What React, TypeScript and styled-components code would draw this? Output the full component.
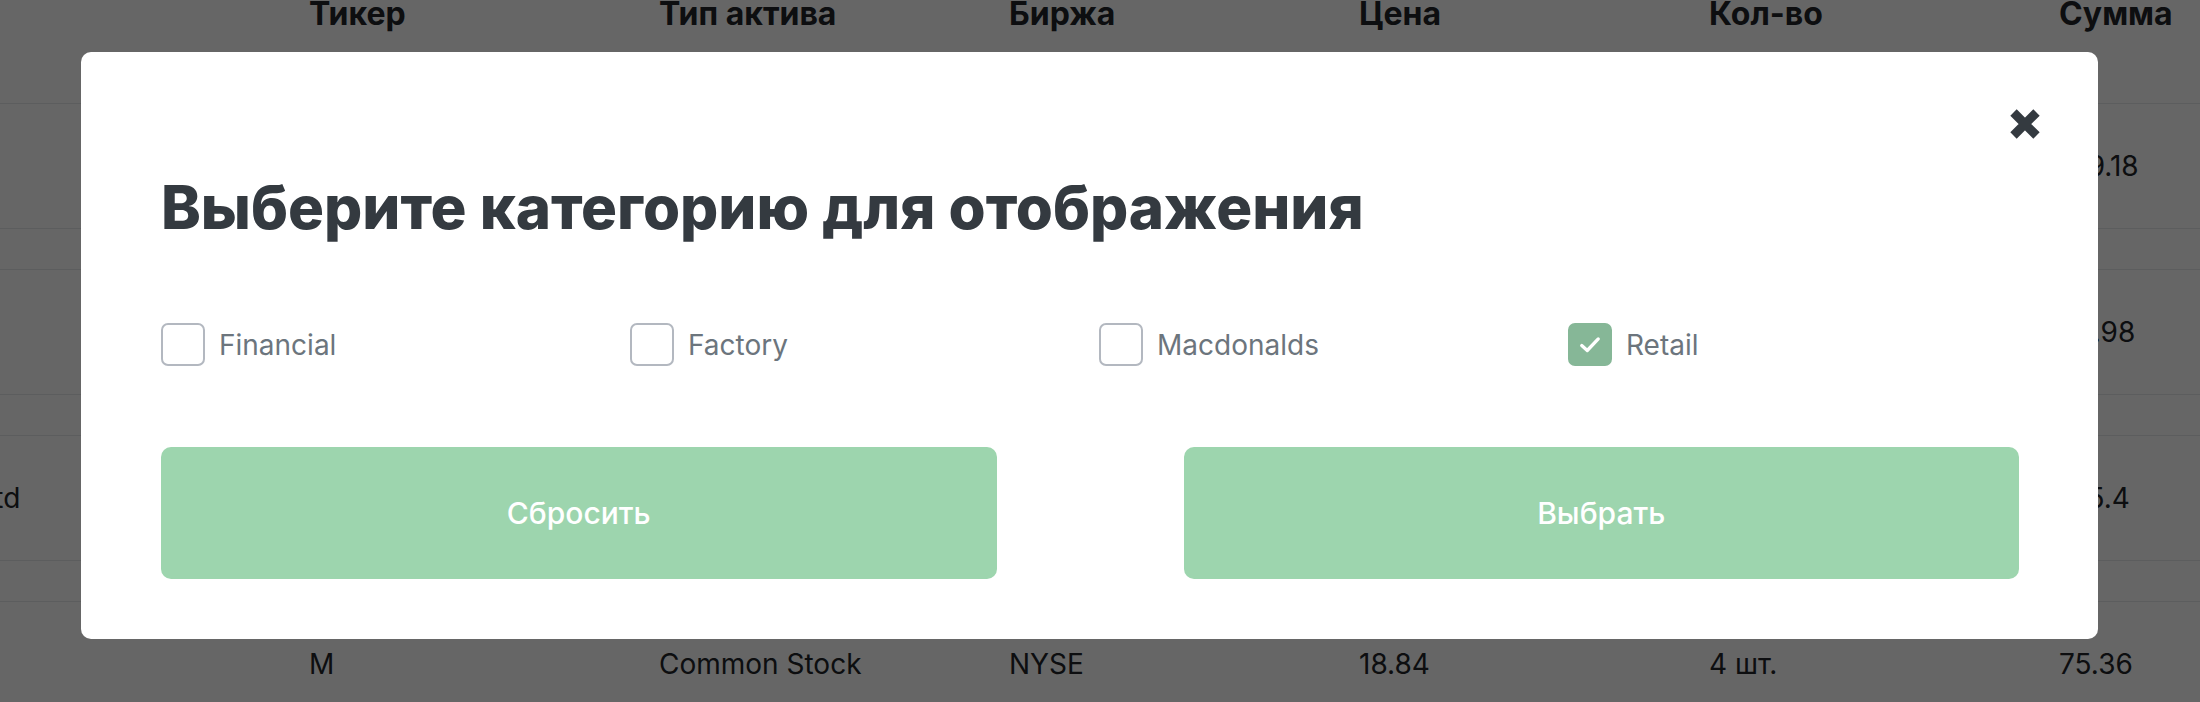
import styled, { createGlobalStyle } from "styled-components";

const GlobalStyle = createGlobalStyle`
    html, body {
        margin: 0;
        padding: 0;
        background: #ffffff;
        font-family: Inter, "Noto Sans", sans-serif;
        color: #212529;
        overflow: hidden;
    }
    * {
        box-sizing: border-box;
    }
`;

const Page = styled.div`
    width: 2200px;
    height: 702px;
    overflow: hidden;
    position: relative;
`;

/* table behind the modal, scrolled to the right */
const Table = styled.div`
    margin-left: -286px;
    margin-top: -2px;
`;

const HeadRow = styled.div`
    display: grid;
    grid-template-columns: 595px repeat(6, 350px);
    height: 105px;
    align-items: start;
`;

const HeadCell = styled.div`
    font-size: 32px;
    font-weight: 700;
    line-height: 32px;
    white-space: nowrap;
`;

const Row = styled.div`
    display: grid;
    grid-template-columns: 595px repeat(6, 350px);
    align-items: center;
    height: 125px;
    border-top: 1px solid #e6e8ec;
`;

const Spacer = styled.div`
    height: 41px;
    border-top: 1px solid #e6e8ec;
`;

const Cell = styled.div`
    font-size: 28px;
    line-height: 34px;
    white-space: nowrap;
`;

const Backdrop = styled.div`
    position: fixed;
    inset: 0;
    background: rgba(0, 0, 0, 0.6);
    padding: 52px 102px 0 81px;
`;

const Dialog = styled.div`
    background: #ffffff;
    border-radius: 10px;
    padding: 56px 79px 60px 80px;
`;

const CloseRow = styled.div`
    display: flex;
    justify-content: flex-end;
    margin-right: -22px;
`;

const CloseButton = styled.button`
    width: 32px;
    height: 32px;
    padding: 0;
    border: none;
    background: none;
    color: #343a40;
    cursor: pointer;
    display: flex;
`;

const Title = styled.h2`
    margin: 30px 0 0;
    font-size: 60px;
    line-height: 74px;
    font-weight: 800;
    color: #343a40;
    white-space: nowrap;
`;

const Options = styled.div`
    display: grid;
    grid-template-columns: repeat(4, 1fr);
    column-gap: 18px;
    margin-top: 79px;
`;

const Option = styled.label`
    display: flex;
    align-items: center;
    gap: 14px;
    font-size: 28px;
    color: #6c757d;
    cursor: pointer;
`;

const Box = styled.span<{ $checked?: boolean }>`
    width: 44px;
    height: 43px;
    border-radius: 7px;
    border: 2px solid ${(p) => (p.$checked ? "#86b797" : "#b3b8c0")};
    background: ${(p) => (p.$checked ? "#86b797" : "#ffffff")};
    display: flex;
    align-items: center;
    justify-content: center;
    flex-shrink: 0;
`;

const Buttons = styled.div`
    display: grid;
    grid-template-columns: 1fr 1fr;
    column-gap: 187px;
    margin-top: 81px;
`;

const ActionButton = styled.button`
    height: 132px;
    border: none;
    border-radius: 10px;
    background: #9dd5ae;
    color: #ffffff;
    font-family: Inter, "Noto Sans", sans-serif;
    font-size: 30px;
    font-weight: 500;
    cursor: pointer;
`;

const head = ["Название", "Тикер", "Тип актива", "Биржа", "Цена", "Кол-во", "Сумма"];

const rows = [
    ["Apple Inc.", "AAPL", "Common Stock", "NASDAQ", "139.18", "1 шт.", "139.18"],
    ["Coca-Cola Co", "KO", "Common Stock", "NYSE", "59.98", "1 шт.", "59.98"],
    ["Brookfield Property Ltd", "BPY", "Common Stock", "NASDAQ", "12.54", "10 шт.", "125.4"],
    ["Mesabi Trust", "M", "Common Stock", "NYSE", "18.84", "4 шт.", "75.36"],
];

const categories = [
    { name: "Financial", checked: false },
    { name: "Factory", checked: false },
    { name: "Macdonalds", checked: false },
    { name: "Retail", checked: true },
];

function CloseIcon() {
    return (
        <svg width="32" height="32" viewBox="0 0 32 32">
            <path
                d="M4.5 4.5 L27.5 27.5 M27.5 4.5 L4.5 27.5"
                stroke="currentColor"
                strokeWidth="9"
                strokeLinecap="butt"
                fill="none"
            />
        </svg>
    );
}

function CheckIcon() {
    return (
        <svg width="22" height="22" viewBox="0 0 20 20">
            <path
                d="M2.5 10.5 L7.5 15 L17.5 4.5"
                stroke="#ffffff"
                strokeWidth="3"
                strokeLinecap="round"
                strokeLinejoin="round"
                fill="none"
            />
        </svg>
    );
}

export default function App(): JSX.Element {
    return (
        <Page>
            <GlobalStyle />
            <Table>
                <HeadRow>
                    {head.map((h) => (
                        <HeadCell key={h}>{h}</HeadCell>
                    ))}
                </HeadRow>
                {rows.map((r, i) => (
                    <div key={i}>
                        <Row>
                            {r.map((c, j) => (
                                <Cell key={j}>{c}</Cell>
                            ))}
                        </Row>
                        <Spacer />
                    </div>
                ))}
            </Table>

            <Backdrop>
                <Dialog>
                    <CloseRow>
                        <CloseButton aria-label="close">
                            <CloseIcon />
                        </CloseButton>
                    </CloseRow>
                    <Title>Выберите категорию для отображения</Title>
                    <Options>
                        {categories.map((c) => (
                            <Option key={c.name}>
                                <Box $checked={c.checked}>{c.checked && <CheckIcon />}</Box>
                                {c.name}
                            </Option>
                        ))}
                    </Options>
                    <Buttons>
                        <ActionButton>Сбросить</ActionButton>
                        <ActionButton>Выбрать</ActionButton>
                    </Buttons>
                </Dialog>
            </Backdrop>
        </Page>
    );
}
